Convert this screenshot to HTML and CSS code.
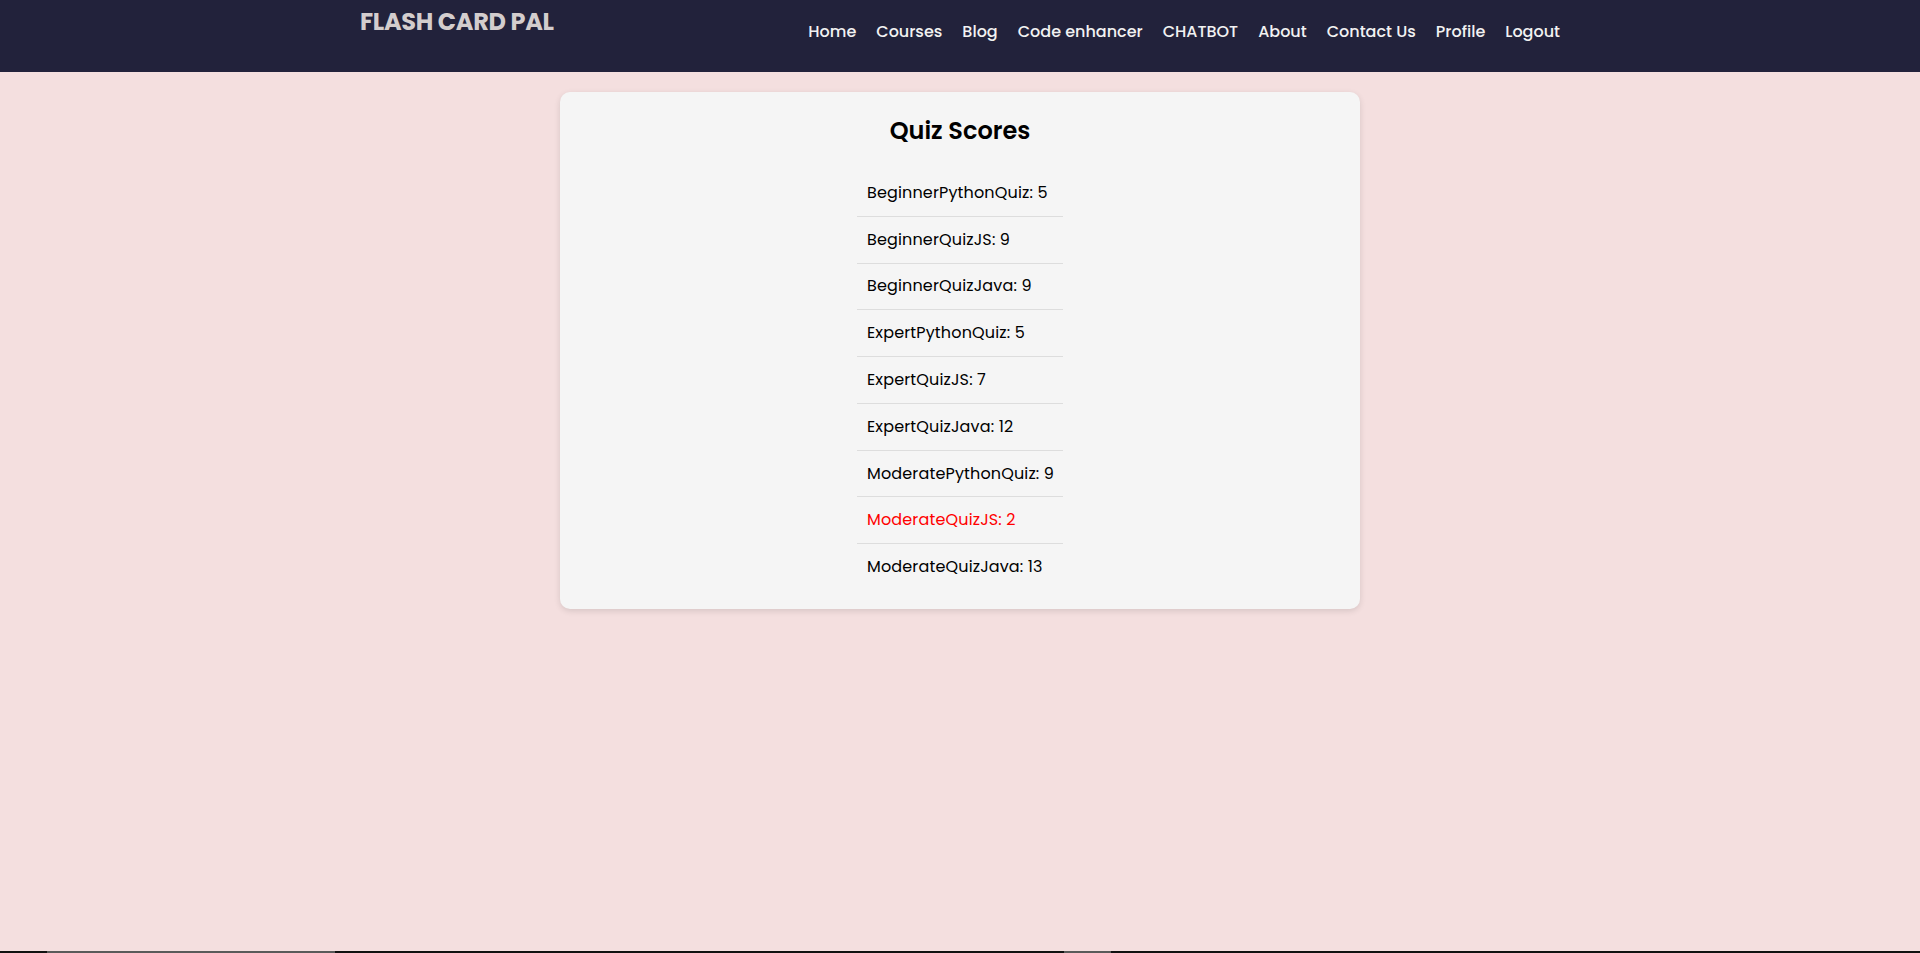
FILE: index.html
```html
<!DOCTYPE html>
<html lang="en">
<head>
<meta charset="utf-8">
<title>Quiz Scores - Flash Card Pal</title>
<link rel="stylesheet" href="styles.css">
</head>
<body>
<header class="topbar">
  <div class="topbar-inner">
    <div class="logo">FLASH CARD PAL</div>
    <ul class="nav-links">
      <li><a href="#">Home</a></li>
      <li><a href="#">Courses</a></li>
      <li><a href="#">Blog</a></li>
      <li><a href="#">Code enhancer</a></li>
      <li><a href="#">CHATBOT</a></li>
      <li><a href="#">About</a></li>
      <li><a href="#">Contact Us</a></li>
      <li><a href="#">Profile</a></li>
      <li><a href="#">Logout</a></li>
    </ul>
  </div>
</header>
<main class="page">
  <section class="card">
    <h2 class="card-title">Quiz Scores</h2>
    <ul class="scores">
      <li>BeginnerPythonQuiz: 5</li>
      <li>BeginnerQuizJS: 9</li>
      <li>BeginnerQuizJava: 9</li>
      <li>ExpertPythonQuiz: 5</li>
      <li>ExpertQuizJS: 7</li>
      <li>ExpertQuizJava: 12</li>
      <li>ModeratePythonQuiz: 9</li>
      <li class="low">ModerateQuizJS: 2</li>
      <li>ModerateQuizJava: 13</li>
    </ul>
  </section>
</main>
<div class="taskbar">
  <span class="tb-seg tb-seg-a"></span>
  <span class="tb-seg tb-seg-b"></span>
</div>
</body>
</html>
```

FILE: styles.css
```css
* { box-sizing: border-box; }
html, body { margin: 0; padding: 0; }
body {
  font-family: "Poppins", "Open Sans", "Liberation Sans", sans-serif;
  background: #f4dfdf;
  min-height: 953px;
  color: #000;
}
.topbar {
  background: #22223b;
  height: 72px;
}
.topbar-inner {
  width: 1200px;
  margin: 0 auto;
  display: flex;
  justify-content: space-between;
  align-items: flex-start;
}
.logo {
  font-size: 24px;
  font-weight: 700;
  color: #d3cdcd;
  line-height: 36px;
  padding-top: 4px;
  letter-spacing: -0.3px;
}
.nav-links {
  list-style: none;
  margin: 0;
  padding: 19px 0 0;
  display: flex;
  gap: 20px;
}
.nav-links a {
  color: #f2f2f2;
  text-decoration: none;
  font-size: 16px;
  font-weight: 500;
  line-height: 24px;
}
.page {
  padding-top: 20px;
  display: flex;
  justify-content: center;
}
.card {
  width: 800px;
  background: #f5f5f5;
  border-radius: 10px;
  box-shadow: 0 2px 6px rgba(0, 0, 0, 0.12);
  padding: 21px 20px 19px;
  display: flex;
  flex-direction: column;
  align-items: center;
}
.card-title {
  margin: 0 0 21px;
  font-size: 24px;
  font-weight: 600;
  line-height: 36px;
}
.scores {
  list-style: none;
  margin: 0;
  padding: 0;
  width: 206px;
}
.scores li {
  font-size: 16px;
  line-height: 24px;
  padding: 10.9px 10px;
  border-bottom: 1px solid #dddddd;
  white-space: nowrap;
  letter-spacing: 0.15px;
}
.scores li:last-child { border-bottom: none; }
.scores li.low { color: #ff0000; }
.taskbar {
  position: fixed;
  left: 0;
  right: 0;
  bottom: 0;
  height: 2px;
  background: #111111;
}
.tb-seg {
  position: absolute;
  top: 0;
  height: 2px;
  background: #5a5a5a;
}
.tb-seg-a { left: 47px; width: 288px; }
.tb-seg-b { left: 1064px; width: 47px; }
```
